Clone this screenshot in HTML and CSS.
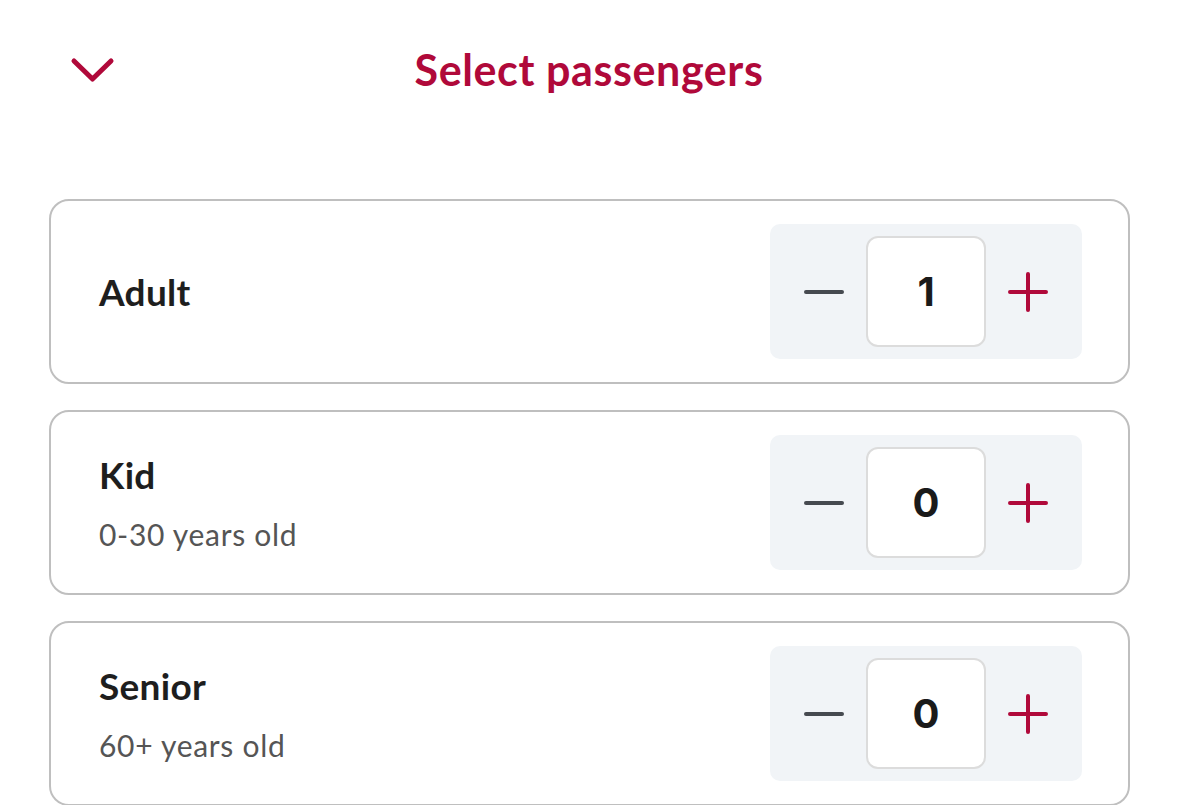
FILE: index.html
```html
<!DOCTYPE html>
<html lang="en">
<head>
<meta charset="utf-8">
<title>Select passengers</title>
<link rel="stylesheet" href="styles.css">
</head>
<body>
<div class="sheet">
  <header class="header">
    <button class="close" aria-label="Close">
      <svg width="45" height="27" viewBox="0 0 45 27"><path d="M4 4 L22.5 22 L41 4" fill="none" stroke="#b0093a" stroke-width="5" stroke-linecap="round" stroke-linejoin="round"/></svg>
    </button>
    <h1 class="title">Select passengers</h1>
    <div></div>
  </header>
  <main class="list">
    <section class="card">
      <div class="info"><div class="name">Adult</div></div>
      <div class="stepper">
        <span class="btn"><svg width="40" height="40" viewBox="0 0 40 40"><path d="M2 20 H38" stroke="#464a50" stroke-width="4" stroke-linecap="round"/></svg></span>
        <span class="count">1</span>
        <span class="btn"><svg width="40" height="40" viewBox="0 0 40 40"><path d="M2 20 H38 M20 2 V38" stroke="#b0093a" stroke-width="4" stroke-linecap="round"/></svg></span>
      </div>
    </section>
    <section class="card">
      <div class="info"><div class="name">Kid</div><div class="sub">0-30 years old</div></div>
      <div class="stepper">
        <span class="btn"><svg width="40" height="40" viewBox="0 0 40 40"><path d="M2 20 H38" stroke="#464a50" stroke-width="4" stroke-linecap="round"/></svg></span>
        <span class="count">0</span>
        <span class="btn"><svg width="40" height="40" viewBox="0 0 40 40"><path d="M2 20 H38 M20 2 V38" stroke="#b0093a" stroke-width="4" stroke-linecap="round"/></svg></span>
      </div>
    </section>
    <section class="card">
      <div class="info"><div class="name">Senior</div><div class="sub">60+ years old</div></div>
      <div class="stepper">
        <span class="btn"><svg width="40" height="40" viewBox="0 0 40 40"><path d="M2 20 H38" stroke="#464a50" stroke-width="4" stroke-linecap="round"/></svg></span>
        <span class="count">0</span>
        <span class="btn"><svg width="40" height="40" viewBox="0 0 40 40"><path d="M2 20 H38 M20 2 V38" stroke="#b0093a" stroke-width="4" stroke-linecap="round"/></svg></span>
      </div>
    </section>
  </main>
</div>
</body>
</html>
```
FILE: styles.css
```css
html, body {
  margin: 0;
  padding: 0;
  background: #ffffff;
  height: 100%;
  overflow: hidden;
}
body {
  font-family: "Lato", "Noto Sans", sans-serif;
  color: #1c1c1c;
}
.sheet {
  width: 1178px;
}
.header {
  height: 138px;
  display: grid;
  grid-template-columns: 1fr auto 1fr;
  align-items: center;
}
.close {
  justify-self: start;
  margin-left: 70px;
  margin-top: 2px;
  padding: 0;
  border: 0;
  background: none;
  display: flex;
}
.title {
  margin: 0;
  font-size: 43px;
  font-weight: 700;
  color: #b0093a;
  letter-spacing: 0.6px;
}
.list {
  margin-top: 61px;
  padding: 0 48px 0 49px;
  display: flex;
  flex-direction: column;
  gap: 26px;
}
.card {
  box-sizing: border-box;
  height: 185px;
  flex-shrink: 0;
  border: 2px solid #bfbfbf;
  border-radius: 20px;
  padding: 0 46px 0 48px;
  display: flex;
  align-items: center;
  justify-content: space-between;
}
.info {
  display: flex;
  flex-direction: column;
  gap: 22px;
}
.name {
  font-size: 37px;
  font-weight: 700;
  color: #1e1e1e;
  line-height: 40px;
  letter-spacing: 0.3px;
}
.sub {
  font-size: 30px;
  font-weight: 400;
  color: #555555;
  line-height: 34px;
  letter-spacing: 0.7px;
}
.stepper {
  box-sizing: border-box;
  width: 312px;
  height: 135px;
  background: #f1f4f7;
  border-radius: 10px;
  padding: 12px 34px;
  display: flex;
  align-items: center;
  gap: 22px;
}
.btn {
  display: flex;
  width: 40px;
  height: 40px;
}
.count {
  box-sizing: border-box;
  width: 120px;
  height: 111px;
  background: #ffffff;
  border: 2px solid #dcdcdc;
  border-radius: 12px;
  display: flex;
  align-items: center;
  justify-content: center;
  font-family: "Inter", "Roboto", sans-serif;
  font-size: 40px;
  font-weight: 700;
  color: #1a1a1a;
}
```
